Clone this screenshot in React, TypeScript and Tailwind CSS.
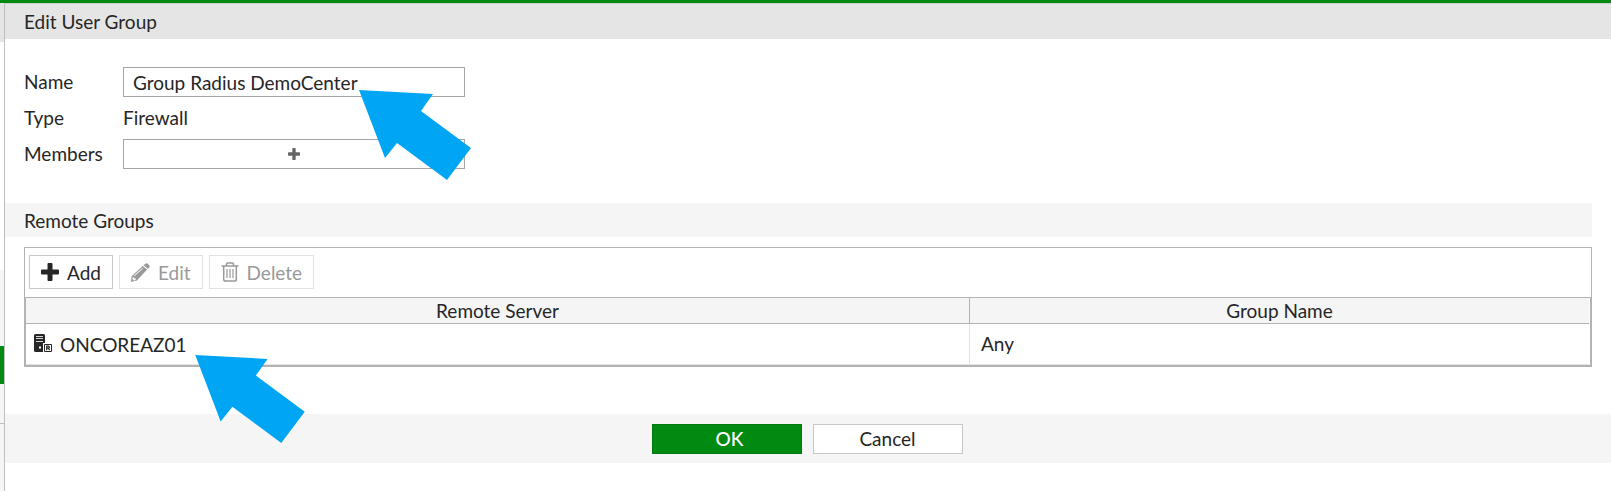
import { useState } from "react";

interface IconProps {
  className?: string;
}

function PlusIcon({ className = "" }: IconProps) {
  return (
    <svg viewBox="0 0 18 18" fill="currentColor" aria-hidden="true" className={className}>
      <path d="M7.5 0h3a1 1 0 0 1 1 1v5.5H17a1 1 0 0 1 1 1v3a1 1 0 0 1-1 1h-5.500V17a1 1 0 0 1-1 1h-3a1 1 0 0 1-1-1v-5.500H1a1 1 0 0 1-1-1v-3a1 1 0 0 1 1-1h5.500V1a1 1 0 0 1 1-1z" />
    </svg>
  );
}

function PencilIcon({ className = "" }: IconProps) {
  return (
    <svg viewBox="0 0 20 20" fill="currentColor" aria-hidden="true" className={className}>
      <path d="M14.500 1.200 16 .300Q17 0 17.800.800L19.300 2.600Q20 3.500 19.300 4.400L17.800 6 13.200 2.400z" />
      <path
        fillRule="evenodd"
        d="M12.300 3.200 17 6.900 6.200 18.500 0 20 .700 13.900zM11.800 5.200 3.300 13.100 4 13.700 12.500 5.900zM2 14.900 1.600 17.200 2.900 18.300 5 17.800 5 16.300 3.500 16.300 3.500 14.900z"
      />
    </svg>
  );
}

function TrashIcon({ className = "" }: IconProps) {
  return (
    <svg viewBox="0 0 18 20" fill="none" stroke="currentColor" strokeWidth="1.500" aria-hidden="true" className={className}>
      <path d="M.500 4h17M5.500 4V2.200Q5.500 1 6.700 1h4.600q1.200 0 1.200 1.200V4M2.700 4v13.200q0 1.800 1.800 1.800h9q1.800 0 1.800-1.800V4" />
      <path strokeWidth="1.200" d="M6 7v9M9 7v9M12 7v9" />
    </svg>
  );
}

function ServerIcon({ className = "" }: IconProps) {
  return (
    <svg viewBox="0 0 18 18" aria-hidden="true" className={className}>
      <path fill="currentColor" d="M1.500 0H9.500a1.500 1.500 0 0 1 1.500 1.500V9H9v9H1.500A1.500 1.500 0 0 1 0 16.500v-15A1.500 1.500 0 0 1 1.500 0z" />
      <path stroke="#d4d4d4" strokeWidth="1" d="M2 2.500h7M2 4.500h7M2 7.500h7" />
      <path fill="#ffffff" d="M5 12.500h2v2H5z" />
      <path fill="#ffffff" stroke="currentColor" strokeWidth="1" d="M10.500 10.500h7v7h-7z" />
      <path fill="none" stroke="currentColor" strokeWidth="1.200" d="M12.700 16.200v-4h1.700q1 0 1 1t-1 1h-1.700M14.300 14.200l1.300 2" />
    </svg>
  );
}

function Arrow({ className = "" }: IconProps) {
  return (
    <svg viewBox="0 0 112 90" fill="#00a6f4" aria-hidden="true" className={`pointer-events-none absolute z-10 ${className}`}>
      <path d="M0 0 74 4 62 21 112 58 88 90 38 53 26 68z" />
    </svg>
  );
}

const remoteGroups = [{ server: "ONCOREAZ01", group: "Any" }];

export default function App() {
  const [name, setName] = useState("Group Radius DemoCenter");

  return (
    <div className="flex min-h-screen flex-col bg-white font-['Lato',sans-serif] text-[19px] leading-6 text-[#262626]">
      <div className="h-[3px] bg-[#008a11]" />
      <div className="flex flex-1">
        {/* Edge of the navigation behind the dialog */}
        <div className="flex w-[5px] shrink-0 flex-col border-r border-[#bfbfbf] bg-[#f5f5f5]">
          <div className="h-[39px] bg-[#e5e5e5]" />
          <div className="h-[228px] bg-white" />
          <div className="mt-[76px] h-[38px] bg-[#008a11]" />
          <div className="mt-[39px] h-px bg-[#bfbfbf]" />
        </div>

        <main className="min-w-0 flex-1">
          <h1 className="flex h-9 items-center border-t border-[#cccccc] bg-[#e5e5e5] px-[19px]">Edit User Group</h1>

          <form onSubmit={(e) => e.preventDefault()}>
            <div className="space-y-[6px] px-[19px] pt-7">
              <div className="relative flex h-[30px] items-center">
                <label htmlFor="name" className="w-[99px]">Name</label>
                <input
                  id="name"
                  value={name}
                  onChange={(e) => setName(e.target.value)}
                  className="h-[30px] w-[342px] border border-[#a6a6a6] bg-white px-[9px] outline-none"
                />
                <Arrow className="top-[23px] left-[335px] h-[90px] w-[112px]" />
              </div>
              <div className="flex h-[30px] items-center">
                <span className="w-[99px]">Type</span>
                <span>Firewall</span>
              </div>
              <div className="flex h-[30px] items-center">
                <span id="members" className="w-[99px]">Members</span>
                <button type="button" aria-labelledby="members" className="flex h-[30px] w-[342px] items-center justify-center border border-[#a6a6a6] bg-white text-[#666666]">
                  <PlusIcon className="size-3" />
                </button>
              </div>
            </div>

            <section className="mt-[34px] mr-[19px]">
              <h2 className="flex h-[34px] items-center bg-[#f5f5f5] px-[19px] pt-0.5">Remote Groups</h2>
              <div className="mt-[10px] ml-[19px] border border-b-0 border-[#b3b3b3]">
                <div className="flex gap-[6px] px-1 pt-[7px] pb-2">
                  <button type="button" className="flex h-[34px] items-center gap-2 border border-[#c8c8c8] px-[11px] pt-0.5">
                    <PlusIcon className="mb-0.5 size-[18px]" />
                    Add
                  </button>
                  <button type="button" disabled className="flex h-[34px] items-center gap-2 border border-[#e2e2e2] px-[11px] pt-0.5 text-[#999999]">
                    <PencilIcon className="mb-0.5 size-[19px]" />
                    Edit
                  </button>
                  <button type="button" disabled className="flex h-[34px] items-center gap-2 border border-[#e2e2e2] px-[11px] pt-0.5 text-[#999999]">
                    <TrashIcon className="mb-0.5 h-5 w-[18px]" />
                    Delete
                  </button>
                </div>
              </div>
              <div className="ml-[19px] border-2 border-t border-[#b3b3b3] pr-px">
                <table className="w-full table-fixed border-separate border-spacing-0">
                  <colgroup>
                    <col className="w-[60.4%]" />
                    <col />
                  </colgroup>
                  <thead>
                    <tr className="h-[26px] bg-[#f5f5f5]">
                      <th className="border-r border-b border-[#b3b3b3] p-0 font-normal">Remote Server</th>
                      <th className="border-b border-[#b3b3b3] p-0 font-normal">Group Name</th>
                    </tr>
                  </thead>
                  <tbody>
                    {remoteGroups.map(({ server, group }) => (
                      <tr key={server} className="h-[41px]">
                        <td className="border-r border-b border-[#e2e2e2] px-2 py-0">
                          <div className="relative flex items-center gap-2 pt-0.5">
                            <ServerIcon className="mb-1 size-[18px]" />
                            {server}
                            <Arrow className="top-6 left-[161px] h-[88px] w-[110px]" />
                          </div>
                        </td>
                        <td className="border-b border-[#e2e2e2] px-[11px] py-0">{group}</td>
                      </tr>
                    ))}
                  </tbody>
                </table>
              </div>
            </section>

            <footer className="mt-[47px] flex justify-center gap-[11px] bg-[#f5f5f5] pt-[10px] pr-0.5 pb-[9px]">
              <button type="submit" className="h-[30px] w-[150px] border border-[#007a0f] bg-[#008a11] pl-[6px] font-medium text-white">OK</button>
              <button type="button" className="h-[30px] w-[150px] border border-[#c8c8c8] bg-white">Cancel</button>
            </footer>
          </form>
        </main>
      </div>
    </div>
  );
}
